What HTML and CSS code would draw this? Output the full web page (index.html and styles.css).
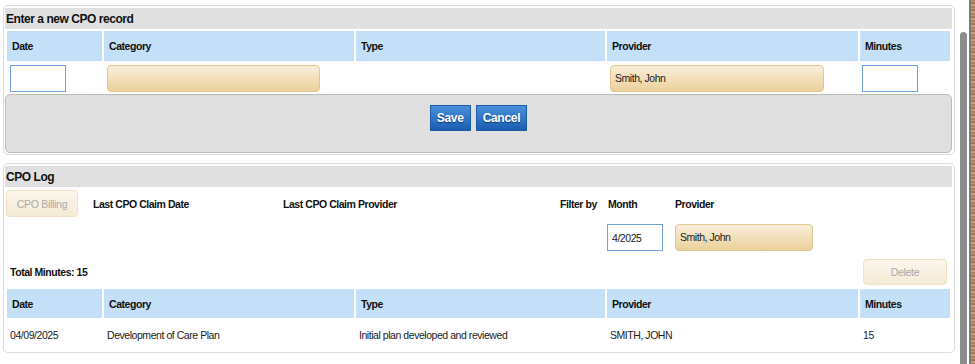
FILE: index.html
```html
<!DOCTYPE html>
<html lang="en">

<head>
    <meta charset="UTF-8" />
    <title>CPO</title>
    <link rel="stylesheet" href="styles.css">
</head>

<body>
    <div class="page">
        <div class="main">

            <!-- New record -->
            <div class="panel panel-new">
                <div class="panel-title">Enter a new CPO record</div>
                <table class="grid">
                    <colgroup>
                        <col class="c-date">
                        <col class="c-cat">
                        <col class="c-type">
                        <col class="c-prov">
                        <col class="c-min">
                    </colgroup>
                    <tr>
                        <th>Date</th>
                        <th>Category</th>
                        <th>Type</th>
                        <th>Provider</th>
                        <th>Minutes</th>
                    </tr>
                    <tr class="input-row">
                        <td><input type="text" class="txt"></td>
                        <td><div class="sel sel-cat"></div></td>
                        <td></td>
                        <td><div class="sel sel-prov">Smith, John</div></td>
                        <td><input type="text" class="txt txt-min"></td>
                    </tr>
                </table>
                <div class="button-bar">
                    <button class="btn-blue">Save</button>
                    <button class="btn-blue">Cancel</button>
                </div>
            </div>

            <!-- Log -->
            <div class="panel panel-log">
                <div class="panel-title">CPO Log</div>
                <div class="toolbar">
                    <button class="btn-faded btn-billing">CPO Billing</button>
                    <span class="lbl">Last CPO Claim Date</span>
                    <span class="lbl">Last CPO Claim Provider</span>
                    <span class="lbl">Filter by</span>
                    <span class="lbl">Month</span>
                    <span class="lbl">Provider</span>
                    <span class="skip"></span>
                    <span class="skip"></span>
                    <span class="skip"></span>
                    <span class="skip"></span>
                    <input type="text" class="txt month" value="4/2025">
                    <div class="sel sel-filter">Smith, John</div>
                </div>
                <div class="total-row">
                    <span class="total">Total Minutes: 15</span>
                    <button class="btn-faded btn-delete">Delete</button>
                </div>
                <table class="grid log">
                    <colgroup>
                        <col class="c-date">
                        <col class="c-cat">
                        <col class="c-type">
                        <col class="c-prov">
                        <col class="c-min">
                    </colgroup>
                    <tr>
                        <th>Date</th>
                        <th>Category</th>
                        <th>Type</th>
                        <th>Provider</th>
                        <th>Minutes</th>
                    </tr>
                    <tr class="data-row">
                        <td>04/09/2025</td>
                        <td>Development of Care Plan</td>
                        <td>Initial plan developed and reviewed</td>
                        <td>SMITH, JOHN</td>
                        <td>15</td>
                    </tr>
                </table>
            </div>
        </div>

        <div class="scroll">
            <div class="thumb"></div>
        </div>
        <div class="wood"></div>
    </div>
</body>

</html>
```

FILE: styles.css
```css
* {
    box-sizing: border-box;
}

body {
    margin: 0;
    background: #fff;
    font-family: 'Liberation Sans', Arial, sans-serif;
    font-size: 10.5px;
    letter-spacing: -0.45px;
    color: #1a1a1a;
}

.page {
    display: flex;
    height: 364px;
    overflow: hidden;
}

.main {
    width: 958px;
    padding: 5px 0 0 3px;
}

.panel {
    width: 952px;
    border: 1px solid #dcdcdc;
    border-radius: 5px;
    padding: 2px 2px 1px 1px;
}

.panel-log {
    margin-top: 8px;
    height: 190px;
}

.panel-title {
    background: #e0e0e0;
    height: 21px;
    line-height: 22px;
    padding-left: 1px;
    font-size: 12px;
    font-weight: bold;
    color: #111;
}

.grid {
    border-collapse: separate;
    border-spacing: 2px;
    table-layout: fixed;
    width: 947px;
}

.c-date { width: 95px; }
.c-cat { width: 250px; }
.c-type { width: 249px; }
.c-prov { width: 251px; }
.c-min { width: 90px; }

.grid th {
    background: #c4dff8;
    height: 30px;
    text-align: left;
    padding: 0 5px;
    font-weight: bold;
    color: #111;
}

.grid td {
    padding: 0 3px;
}

.input-row td {
    height: 29px;
    padding-top: 2px;
    vertical-align: top;
}

.txt {
    width: 56px;
    height: 27px;
    border: 1px solid #6f9fdc;
    background: #fff;
    font-family: inherit;
    font-size: 10.5px;
    letter-spacing: -0.45px;
    padding: 0 4px;
    display: block;
}

.txt-min {
    margin-left: -1px;
}

.sel {
    height: 27px;
    line-height: 25px;
    border: 1px solid #e2c68f;
    border-radius: 4px;
    background: linear-gradient(#f8eed9, #ecd19c);
    padding: 0 4px;
    color: #1a1a1a;
}

.sel-cat {
    width: 213px;
}

.sel-prov {
    width: 214px;
}

.button-bar {
    height: 59px;
    background: #dfdfdf;
    border: 1px solid #bcbcbc;
    border-radius: 5px;
    display: flex;
    justify-content: center;
    align-items: flex-start;
    gap: 5px;
    padding-top: 10px;
}

.btn-blue {
    height: 26px;
    padding: 0 6px;
    border: 1px solid #1b5aa5;
    background: linear-gradient(#4a90dc, #1a5db0);
    color: #fff;
    font-family: inherit;
    font-size: 12px;
    letter-spacing: -0.3px;
    font-weight: bold;
    text-shadow: 0 1px 1px #0d3b75;
}

.toolbar {
    display: grid;
    grid-template-columns: 87px 190px 277px 48px 67px 1fr;
    grid-template-rows: 27px 27px;
    row-gap: 7px;
    align-items: center;
    padding: 3px 0 0 1px;
}

.lbl {
    font-weight: bold;
    color: #111;
}

.btn-faded {
    height: 27px;
    border: 1px solid #eee0c4;
    border-radius: 4px;
    background: linear-gradient(#fbf6ec, #f5ead5);
    color: #a9a9a9;
    font-family: inherit;
    font-size: 10.5px;
    letter-spacing: -0.3px;
}

.btn-billing {
    width: 72px;
}

.month {
    height: 27px;
    margin-left: -1px;
    color: #1a1a1a;
}

.sel-filter {
    width: 138px;
}

.total-row {
    display: flex;
    justify-content: space-between;
    align-items: center;
    padding: 8px 5px 0 5px;
}

.total {
    font-weight: bold;
    color: #111;
}

.btn-delete {
    width: 84px;
    height: 26px;
}

.log {
    margin-top: 2px;
}

.log th {
    height: 29px;
}

.data-row td {
    height: 29px;
    padding: 0 3px;
    color: #1a1a1a;
}

.scroll {
    width: 9px;
    padding: 32px 0 0 2px;
}

.thumb {
    width: 7px;
    height: 340px;
    background: #8c8c8c;
    border-radius: 4px 4px 0 0;
}

.wood {
    flex: 1;
    border-left: 2px solid #7a7a7a;
    margin-left: 2px;
    background: repeating-linear-gradient(180deg, #a9785a 0px, #c89a78 2px, #8c5a3c 3px, #d8b394 5px, #9c6a4a 7px);
}
```
